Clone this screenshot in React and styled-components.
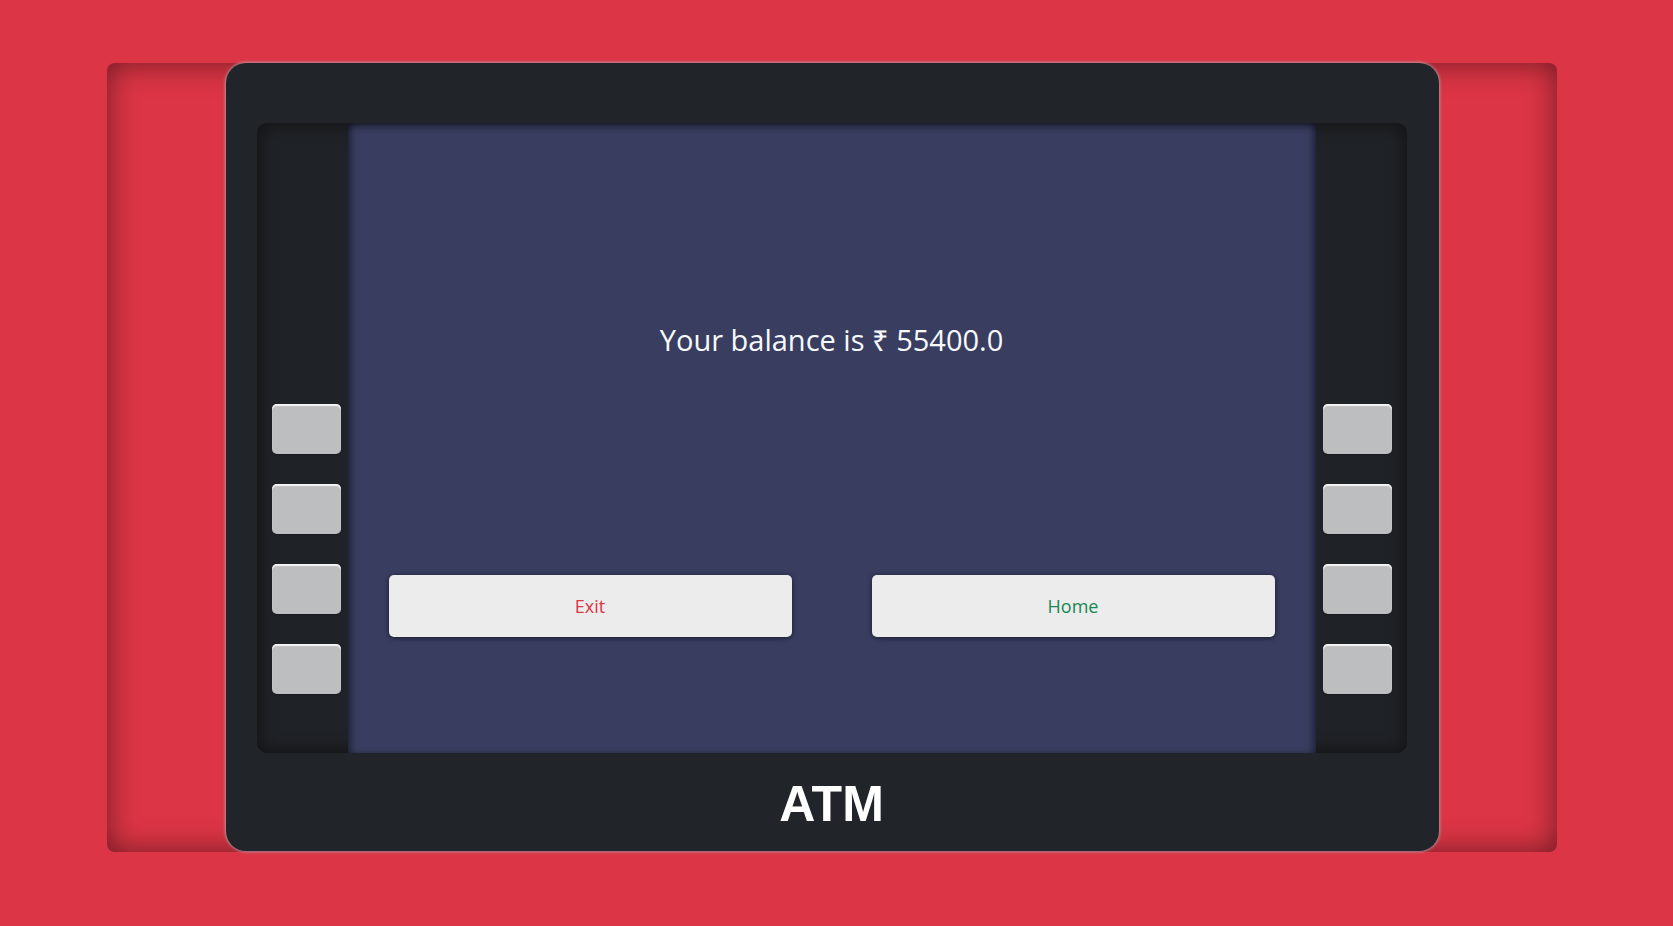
import styled, { createGlobalStyle } from 'styled-components'

const GlobalStyle = createGlobalStyle`
  html, body {
    margin: 0;
    padding: 0;
    background: #dc3545;
  }
  body {
    font-family: "Open Sans", "Noto Sans", sans-serif;
  }
`

const Page = styled.div`
  width: 1673px;
  height: 926px;
  box-sizing: border-box;
  padding: 63px 116px 74px 107px;
`

const Recess = styled.section`
  width: 1450px;
  height: 789px;
  border-radius: 8px;
  background: #dc3545;
  box-shadow: inset 0 0 30px rgba(0, 0, 0, 0.5);
  display: flex;
  justify-content: center;
`

const Machine = styled.div`
  width: 1213px;
  height: 788px;
  box-sizing: border-box;
  padding: 60px 32px 0 31px;
  background: #212529;
  border-radius: 20px;
  box-shadow: 0 0 3px 1px rgba(173, 181, 189, 0.7);
  display: flex;
  flex-direction: column;
`

const Bezel = styled.div`
  height: 630px;
  display: flex;
  border-radius: 10px;
  overflow: hidden;
  background: #1f2226;
  box-shadow: inset 0 0 18px rgba(0, 0, 0, 0.55);
`

const Keys = styled.div`
  width: 91px;
  box-sizing: border-box;
  padding-top: 281px;
  padding-left: ${(p) => (p.$side === 'left' ? '15px' : '7px')};
  display: flex;
  flex-direction: column;
  gap: 30px;
`

const Key = styled.button`
  width: 69px;
  height: 50px;
  padding: 0;
  border: none;
  border-radius: 5px;
  background: #bdbec0;
  box-shadow: inset 0 2px 1px #f4f4f4, 0 1px 1px rgba(0, 0, 0, 0.35);
`

const Screen = styled.main`
  width: 968px;
  background: #393e61;
  box-shadow: inset 0 6px 8px -3px rgba(0, 0, 0, 0.55),
    inset 6px 0 8px -4px rgba(0, 0, 0, 0.45),
    inset -6px 0 8px -4px rgba(0, 0, 0, 0.45);
  display: flex;
  flex-direction: column;
  align-items: center;
  padding-top: 197px;
  box-sizing: border-box;
`

const Balance = styled.h2`
  margin: 0;
  font-family: "Open Sans", "Noto Sans", sans-serif;
  font-weight: 400;
  font-size: 29px;
  line-height: 40px;
  color: #f8f9fa;
`

const Actions = styled.div`
  margin-top: 215px;
  display: flex;
  gap: 80px;
`

const Action = styled.button`
  width: 403px;
  height: 62px;
  padding-bottom: 2px;
  border: none;
  border-radius: 5px;
  background: #ececec;
  box-shadow: 0 1px 5px rgba(0, 0, 0, 0.6);
  font-family: "Open Sans", "Noto Sans", sans-serif;
  font-size: 18px;
  color: ${(p) => p.$color};
  cursor: pointer;
`

const Footer = styled.footer`
  flex: 1;
  display: flex;
  align-items: center;
  justify-content: center;
  padding-top: 3px;
`

const Brand = styled.h1`
  margin: 0;
  font-family: "Liberation Sans", Arial, sans-serif;
  font-weight: 700;
  font-size: 50px;
  color: #ffffff;
`

const KeyColumn = ({ side }) => (
  <Keys $side={side}>
    <Key />
    <Key />
    <Key />
    <Key />
  </Keys>
)

const App = () => {
  return (
    <Page>
      <GlobalStyle />
      <Recess>
        <Machine>
          <Bezel>
            <KeyColumn side="left" />
            <Screen>
              <Balance>Your balance is ₹ 55400.0</Balance>
              <Actions>
                <Action $color="#dc3545">Exit</Action>
                <Action $color="#198754">Home</Action>
              </Actions>
            </Screen>
            <KeyColumn side="right" />
          </Bezel>
          <Footer>
            <Brand>ATM</Brand>
          </Footer>
        </Machine>
      </Recess>
    </Page>
  )
}

export default App
